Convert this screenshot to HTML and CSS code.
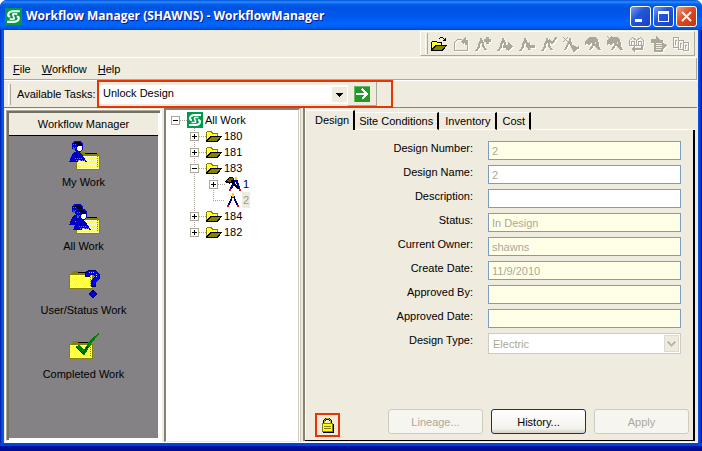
FILE: index.html
```html
<!DOCTYPE html>
<html lang="en">
<head>
<meta charset="utf-8">
<title>Workflow Manager (SHAWNS) - WorkflowManager</title>
<link rel="stylesheet" href="styles.css">
</head>
<body>
<svg class="defs" aria-hidden="true">
  <defs>
    <symbol id="logo" viewBox="0 0 16 16">
      <path fill="#009a4a" d="M0 0h16v16H0z"/>
      <g class="smooth" fill="none" stroke="#fff" stroke-width="2">
        <path d="M14 3H8Q3 3 3 6.500 3 8 5 8"/>
        <path d="M2 13h6q5 0 5-3.500Q13 8 11 8"/>
        <path d="M11.500 5.500H8.500Q6.500 5.500 8 8t-.500 2.500H4.500" stroke-width="1.500"/>
      </g>
    </symbol>
    <symbol id="folder" viewBox="0 0 16 16">
      <path fill="#848200" d="M1 3h5l1 2h5v4H1v4H0V4h1z"/>
      <path fill="#ffff31" d="M1 4h4l1 2h5v3H4l-3 3z"/>
      <path stroke="#fff" stroke-dasharray="1 1" d="M1 5.500h5M2 7.500h9M1 9.500h3"/>
      <path fill="#000" d="M4 8h12l-4 6H0v-1z"/>
      <path fill="#848200" d="M5 9h9l-3 4H1z"/>
    </symbol>
    <symbol id="open" viewBox="0 0 16 16">
      <path fill="#000" d="M1 5h4l1 1h5v3H2v5H0V6h1z"/>
      <path fill="#ffff31" d="M1 6h4l1 1h4v2H4l-3 4z"/>
      <path stroke="#fff" stroke-dasharray="1 1" d="M1 7.500h5M1 9.500h3"/>
      <path fill="#000" d="M4 9h12l-4 6H0v-1z"/>
      <path fill="#848200" d="M5 10h9l-3 4H1z"/>
      <path fill="#000" d="M9 1h3v1H9zM8 2h1v1H8zM12 2h1v1h-1zM13 3h1V2h1v3h-3V4h1z"/>
    </symbol>
    <symbol id="compass" viewBox="0 0 16 16">
      <path fill="#000084" d="M6 4h4v3h1v2h1v2h1v2h-2v-2h-1V9H9V6H7v3H6v2H5v2H3v-2h1V9h1V7h1z"/>
      <path fill="#ffce00" d="M7 1h2v4H7z"/>
      <path fill="#f00" d="M2 13h2v2H2zM12 13h2v2h-2z"/>
    </symbol>
    <symbol id="hammer" viewBox="0 0 16 16">
      <path fill="#0000a5" d="M8 4h5v3h1v3h1v3h-2v-2h-1V8h-1V6h-1v2H9v2H8v2H7v1H5v-2h1V9h1V7h1z"/>
      <path fill="#ffce00" d="M10 1h2v3h-2z"/>
      <path fill="#f00" d="M4 13h2v2H4zM14 13h2v2h-2z"/>
      <path fill="#000" d="M0 5h1V4h1V3h1V2h1V1h4v1h1v3H8v1h1v1h1v1h1v1h1v1h1v1h1v2h-2v-1h-1v-1h-1v-1H9V9H8V8H7V7H5v1H4V7H1z"/>
      <path fill="#636300" d="M2 4h2V2h4v2H6v2H3z"/>
    </symbol>
    <symbol id="legs" viewBox="0 0 16 16">
      <path fill="none" stroke="currentColor" stroke-width="2" d="M6 2v3L4 8v3l-3 4M6 4l2 3v3l3 4"/>
    </symbol>
    <symbol id="mallet" viewBox="0 0 16 16">
      <path fill="none" stroke="currentColor" stroke-width="2" d="M9 6 8 9l-3 5M11 3l2 4v4l2 3"/>
      <path fill="currentColor" d="M0 5 4 1h6l3 3v4l1 3-1 3-7-7-2 2-2-1-2 1z"/>
      <path fill="#efebde" d="M10 6h1v2h-1z"/>
    </symbol>
    <symbol id="worker" viewBox="0 0 20 24">
      <path fill="#0000ce" d="M5 1h6l3 3v5l-3 3H7L4 9H3V4z"/>
      <path fill="#000" d="M6 2h5l2 3v1H8V4H5z"/>
      <path stroke="#5252ff" stroke-dasharray="1 1" d="M4 4.500h4M4 7.500h3"/>
      <path fill="#fff" d="M9 6h4v3l-2 2H9L8 9z"/>
      <path fill="#008484" d="M4 8h2v2H4z"/>
      <path fill="#0000ce" d="M5 12h5l4 4 4 6-5-1-3-1-2 2H0l2-5z"/>
      <path stroke="#7b7bd6" stroke-dasharray="1 1" d="M6 18.500h7M7 20.500h9"/>
      <path fill="#000084" d="M7 13h2v5H7z"/>
    </symbol>
    <symbol id="sheet" viewBox="0 0 24 18">
      <path fill="#848200" d="M1 3 4 0h5l2 2h10l3 1v15H0V3z"/>
      <path stroke="#000" d="M9 1.500h12"/>
      <path fill="#ffff42" d="M1 4h22v12H1z"/>
      <path stroke="#fff" stroke-dasharray="1 1" d="M2 4.500h19M2 8.500h19M2 12.500h19"/>
      <path stroke="#fff" stroke-dasharray="1 1" d="M3 6.500h18M3 10.500h18M3 14.500h18"/>
      <path stroke="#848200" stroke-dasharray="1 1" d="M21.500 4v12"/>
      <path stroke="#ffffb5" d="M1 16.500h22"/>
    </symbol>
  </defs>
</svg>

<div class="window">
  <header class="titlebar">
    <svg class="icon logo"><use href="#logo"/></svg>
    <h1>Workflow Manager (SHAWNS) - WorkflowManager</h1>
    <div class="captions">
      <button class="caption" aria-label="Minimize"><svg viewBox="0 0 19 19"><path fill="#fff" d="M4 12h7v3H4z"/></svg></button>
      <button class="caption" aria-label="Maximize"><svg viewBox="0 0 19 19"><path fill="none" stroke="#fff" d="M4.500 5.500h10v9h-10z"/><path fill="#fff" d="M4 4h11v3H4z"/></svg></button>
      <button class="caption close" aria-label="Close"><svg class="smooth" viewBox="0 0 19 19"><path stroke="#fff" stroke-width="2" d="m5 5 9 9M14 5l-9 9"/></svg></button>
    </div>
  </header>

  <div class="client">
    <div class="toolrow">
      <div class="toolbar" role="toolbar" aria-label="Design tools">
        <span class="grip"></span>
        <button aria-label="Open"><svg class="icon"><use href="#open"/></svg></button>
        <button disabled aria-label="New work"><svg class="icon" viewBox="0 0 16 16"><path fill="none" stroke="currentColor" d="M1.500 14.500V6.500l3-3h4M1.500 14.500h13V5"/><path fill="currentColor" d="m8 5 4-4 1 1v2h2v5h-3V6l-2 2z"/></svg></button>
        <button disabled aria-label="Add design"><svg class="icon" viewBox="0 0 16 16"><use href="#legs"/><path fill="currentColor" d="M9 3h2V1h3v2h2v3h-2v2h-3V6H9z"/></svg></button>
        <button disabled aria-label="Send design"><svg class="icon" viewBox="0 0 16 16"><use href="#legs"/><path fill="currentColor" d="M6 9h5V6l5 4-5 5v-3H6z"/></svg></button>
        <button disabled aria-label="Return design"><svg class="icon" viewBox="0 0 16 16"><use href="#legs"/><path fill="currentColor" d="M16 9v3h-5v3l-5-5 5-4v3z"/></svg></button>
        <button disabled aria-label="Approve design"><svg class="icon" viewBox="0 0 16 16"><use href="#legs"/><path fill="none" stroke="currentColor" stroke-width="2" d="m8 4 3 3 5-6"/></svg></button>
        <button disabled aria-label="Cancel design"><svg class="icon" viewBox="0 0 16 16"><path fill="none" stroke="currentColor" d="m0 1 5 5M5 1 0 6"/><path fill="none" stroke="currentColor" stroke-width="2" d="M7 2v3L5 8l-3 6M7 5l2 6 2 4 5-4"/><path fill="currentColor" d="m8 8 4 2 3 2-4 4z"/></svg></button>
        <button disabled aria-label="Construct"><svg class="icon"><use href="#mallet"/></svg></button>
        <button disabled aria-label="Cancel construction"><svg class="icon" viewBox="0 0 16 16"><use href="#mallet"/><path stroke="currentColor" d="m0 0 5 5M5 0 0 5"/></svg></button>
        <button disabled aria-label="Exchange"><svg class="icon" viewBox="0 0 16 16"><path fill="none" stroke="currentColor" d="M.500 9.500v-5l3-3 4 3 4-3 3 3v5zM7.500 4v5M2.500 9V5.500h3V9M9.500 9V5.500h3V9"/><path fill="currentColor" d="m2 13 4-3v2h6v-2h2v4H6v2z"/></svg></button>
        <button disabled aria-label="Transfer document"><svg class="icon" viewBox="0 0 16 16"><path fill="currentColor" d="M0 3h5V0l5 4h2v3l4 2-4 5v2H3V7H0z"/><path stroke="#efebde" d="M5 7.500h6M5 9.500h6M5 11.500h6M5 13.500h5"/></svg></button>
        <button disabled aria-label="Reports"><svg class="icon" viewBox="0 0 16 16"><path fill="none" stroke="currentColor" d="M.500 1.500h5v10h-5zM6 4.500h4v9H5.500v-2M10 6.500h5v8h-5M2 4h2M7 7h2M12 9h2M2.500 4v5M7.500 7v5M12.500 9v4"/></svg></button>
      </div>
    </div>

    <nav class="menubar">
      <button><u>F</u>ile</button>
      <button><u>W</u>orkflow</button>
      <button><u>H</u>elp</button>
    </nav>

    <div class="taskbar">
      <span class="grip"></span>
      <label for="task">Available Tasks:</label>
      <div class="callout">
        <div class="combo">
          <select id="task"><option>Unlock Design</option></select>
          <svg class="arrow" viewBox="0 0 15 15"><path fill="#efebde" d="M0 0h15v15H0z"/><path d="M4 6h7v1h-1v1H9v1H8v1H7V9H6V8H5V7H4z"/></svg>
        </div>
        <div class="gobox">
          <button class="go" aria-label="Run task"><svg class="icon" viewBox="0 0 16 16"><path fill="#219a29" d="M0 0h16v16H0z"/><path fill="none" stroke="#63ba63" d="M0 .500h16M.500 0v16"/><path fill="none" stroke="#fff" stroke-width="2" d="M2 8h11M8 3l5 5-5 5"/></svg></button>
        </div>
      </div>
    </div>

    <main class="panes">
      <aside class="outlook">
        <h2>Workflow Manager</h2>
        <a href="#my"><svg viewBox="0 0 32 32"><use href="#sheet" x="8" y="14" width="24" height="18"/><use href="#worker" x="1" y="2" width="20" height="24"/></svg>My Work</a>
        <a href="#all"><svg viewBox="0 0 32 32"><use href="#sheet" x="8" y="14" width="24" height="18"/><use href="#worker" x="1" y="1" width="20" height="24"/><use href="#worker" x="5" y="6" width="20" height="24"/></svg>All Work</a>
        <a href="#status"><svg viewBox="0 0 32 32"><use href="#sheet" x="1" y="5" width="24" height="18"/><path fill="none" stroke="#000063" stroke-width="5" d="M19 11V8l3-2h4l3 3v3l-4 4v5"/><path fill="none" stroke="#0000ff" stroke-width="3" d="M19 10V8l3-2h4l3 3v3l-4 4v4"/><path stroke="#9cceff" stroke-dasharray="1 1" d="M21 6.500h5M28.500 8v4"/><path fill="#0000ce" stroke="#000063" d="m25 24 4 4-4 4-4-4z"/></svg>User/Status Work</a>
        <a href="#done"><svg viewBox="0 0 32 32"><use href="#sheet" x="1" y="11" width="24" height="18"/><path fill="#008200" d="m8 16 3-1 5 5 6-10 9-7v1l-8 10-7 12z"/><path fill="none" stroke="#003100" d="m8 17 7 7 5-8"/></svg>Completed Work</a>
      </aside>

      <section class="tree" aria-label="Work tree">
        <ul>
          <li>
            <div class="node"><button class="expander" aria-label="Collapse"><svg viewBox="0 0 9 9"><path d="M2 4h5v1H2z"/></svg></button><i class="link"></i><svg class="icon"><use href="#logo"/></svg><span>All Work</span></div>
            <ul class="trunk">
              <li class="node"><button class="expander" aria-label="Expand"><svg viewBox="0 0 9 9"><path d="M2 4h5v1H2zM4 2h1v5H4z"/></svg></button><i class="link"></i><svg class="icon"><use href="#folder"/></svg><span>180</span></li>
              <li class="node"><button class="expander" aria-label="Expand"><svg viewBox="0 0 9 9"><path d="M2 4h5v1H2zM4 2h1v5H4z"/></svg></button><i class="link"></i><svg class="icon"><use href="#folder"/></svg><span>181</span></li>
              <li>
                <div class="node"><button class="expander" aria-label="Collapse"><svg viewBox="0 0 9 9"><path d="M2 4h5v1H2z"/></svg></button><i class="link"></i><svg class="icon"><use href="#folder"/></svg><span>183</span></div>
                <ul class="trunk">
                  <li class="node"><button class="expander" aria-label="Expand"><svg viewBox="0 0 9 9"><path d="M2 4h5v1H2zM4 2h1v5H4z"/></svg></button><i class="link"></i><svg class="icon"><use href="#hammer"/></svg><span>1</span></li>
                  <li class="node leaf"><i class="link"></i><svg class="icon"><use href="#compass"/></svg><span class="selected">2</span></li>
                </ul>
              </li>
              <li class="node"><button class="expander" aria-label="Expand"><svg viewBox="0 0 9 9"><path d="M2 4h5v1H2zM4 2h1v5H4z"/></svg></button><i class="link"></i><svg class="icon"><use href="#folder"/></svg><span>184</span></li>
              <li class="node"><button class="expander" aria-label="Expand"><svg viewBox="0 0 9 9"><path d="M2 4h5v1H2zM4 2h1v5H4z"/></svg></button><i class="link"></i><svg class="icon"><use href="#folder"/></svg><span>182</span></li>
            </ul>
          </li>
        </ul>
      </section>

      <section class="details">
        <div class="tabs" role="tablist">
          <button role="tab" aria-selected="true">Design</button>
          <button role="tab">Site Conditions</button>
          <button role="tab">Inventory</button>
          <button role="tab">Cost</button>
          <span class="rest"></span>
        </div>
        <form class="page">
          <div class="fields">
            <label for="num">Design Number:</label><input id="num" class="locked" value="2" disabled>
            <label for="name">Design Name:</label><input id="name" value="2" disabled>
            <label for="desc">Description:</label><input id="desc">
            <label for="status">Status:</label><input id="status" class="locked" value="In Design" disabled>
            <label for="owner">Current Owner:</label><input id="owner" class="locked" value="shawns" disabled>
            <label for="created">Create Date:</label><input id="created" class="locked" value="11/9/2010" disabled>
            <label for="by">Approved By:</label><input id="by" class="locked" disabled>
            <label for="date">Approved Date:</label><input id="date" class="locked" disabled>
            <label for="type">Design Type:</label>
            <div class="combo type">
              <select id="type" disabled><option>Electric</option></select>
              <svg class="arrow" viewBox="0 0 15 17"><rect x=".500" y=".500" width="14" height="16" rx="1" fill="#efebde" stroke="#dedbce"/><path fill="none" stroke="#bdbaad" stroke-width="2" d="m4 7 3.500 3.500L11 7"/></svg>
            </div>
          </div>
          <div class="actions">
            <span class="lock"><svg viewBox="0 0 14 16" role="img" aria-label="Locked"><path d="M4 1h5v1h1v1h1v4H9V4H8V3H5v1H4v3H2V3h1V2h1z"/><path fill="#b5b200" d="M5 2h3v1h1v4h1V3H9V2H8V1H5v1H4v1H3v4h1V3h1z"/><path d="M2 7h11v9H2z"/><path fill="#848200" d="M1 6h11v9H1z"/><path fill="#ffff00" d="M2 7h9v7H2z"/><path stroke="#848200" d="M3 9.500h7M3 11.500h7"/></svg></span>
            <div class="buttons">
              <button type="button" disabled>Lineage...</button>
              <button type="button" class="default">History...</button>
              <button type="button" disabled>Apply</button>
            </div>
          </div>
        </form>
      </section>
    </main>
  </div>
</div>
</body>
</html>
```

FILE: styles.css
```css
* { box-sizing: border-box; }

body {
  margin: 0;
  background: #fff;
  color: #000;
  font: 11px/16px "Liberation Sans", Arial, sans-serif;
}

button, input, select { font: inherit; color: inherit; margin: 0; padding: 0; border: 0; background: none; border-radius: 0; }
ul { list-style: none; margin: 0; padding: 0; }
svg { display: block; flex: none; shape-rendering: crispEdges; }
.smooth { shape-rendering: auto; }
.defs { position: absolute; width: 0; height: 0; }
.icon { width: 16px; height: 16px; }

.window {
  display: flex;
  flex-direction: column;
  min-height: 100vh;
  padding: 0 4px 8px;
  border-radius: 7px 7px 0 0;
  background:
    linear-gradient(#0042de, #0042de 3px, #0014a5 3px, #000c8c) bottom / 100% 8px no-repeat,
    linear-gradient(90deg, #0018a5, #0855e7 2px, #0855e7 4px, #0855e7 calc(100% - 4px), #0041d6 calc(100% - 2px), #00138c);
}

.titlebar {
  display: flex;
  align-items: center;
  gap: 4px;
  height: 30px;
  margin: 0 -4px;
  padding: 2px 5px 0;
  border-radius: 7px 7px 0 0;
  background: linear-gradient(#0050d6, #2a8cff 2px, #0561ed 4px, #0052e0 8px, #0058ee 16px, #0066ff 25px, #0050dd 29px, #003cc6);
}
.titlebar h1 {
  flex: 1;
  margin: 0;
  color: #fff;
  font: bold 12px/18px "Open Sans", "Noto Sans", sans-serif;
  text-shadow: 1px 1px #0a1883;
  white-space: nowrap;
}
.logo { width: 17px; height: 17px; }
.captions { display: flex; gap: 2px; }
.caption { width: 21px; height: 21px; border: 1px solid #fff; border-radius: 3px; background: linear-gradient(135deg, #7b9ef0, #2456da 40%, #1941c4); }
.caption svg { width: 19px; height: 19px; }
.close { background: linear-gradient(135deg, #f0a088, #e04a20 45%, #c03410); }

.client { flex: 1; display: flex; flex-direction: column; background: #efebde; border-right: 1px solid #efebde; }

.toolrow { display: flex; justify-content: flex-end; height: 28px; padding: 1px 2px 1px 0; border-bottom: 1px solid #fff; }
.toolbar { display: flex; align-items: center; padding-left: 4px; border: 1px solid #fff; border-right-color: #aca899; border-bottom-color: #aca899; }
.toolbar button { display: grid; place-items: center; width: 22px; height: 22px; }
.toolbar button:last-child { margin-right: 2px; }
.toolbar button:disabled { color: #aca899; }
.toolbar button:disabled svg { filter: drop-shadow(1px 1px 0 #fff); }
.grip { width: 3px; height: 21px; border-left: 1px solid #fff; border-right: 1px solid #aca899; }

.menubar { display: flex; align-items: center; gap: 11px; height: 22px; padding-left: 9px; border-bottom: 1px solid #aca899; border-right: 1px solid #aca899; }

.taskbar { display: flex; align-items: center; height: 28px; padding-left: 4px; border-top: 1px solid #fff; border-bottom: 1px solid #848274; }
.taskbar label { width: 86px; padding-left: 6px; white-space: nowrap; }
.callout { display: flex; align-items: center; width: 296px; height: 28px; border: 2px solid #e73400; }
.combo { display: grid; align-items: center; background: #fff; }
.combo select { grid-area: 1 / 1; width: 100%; height: 100%; padding: 0 20px 0 4px; appearance: none; opacity: 1; }
.combo .arrow { grid-area: 1 / 1; justify-self: end; width: 15px; height: 15px; margin-right: 1px; pointer-events: none; }
.callout .combo { flex: 1; height: 19px; }
.callout select { padding-bottom: 2px; }
.gobox { display: grid; place-items: center; width: 29px; height: 24px; margin-right: 14px; border-right: 1px solid #aca899; border-bottom: 1px solid #aca899; }

.panes { flex: 1; display: grid; grid-template-columns: 157px 137px 1fr; gap: 2px; padding-left: 1px; border-bottom: 1px solid #fff; }

.outlook {
  display: flex;
  flex-direction: column;
  margin-top: 1px;
  border: 2px solid #aca899;
  border-right-color: #fff;
  border-bottom-color: #fff;
  outline: 1px solid #fff;
  outline-offset: -1px;
  box-shadow: inset 2px 2px #737163, inset -2px -2px #fff;
  padding: 2px;
  background: #848284;
}
.outlook h2 { margin: 0 0 2px; height: 23px; padding: 3px 0; border-bottom: 1px solid #000; background: #efebde; font-size: 11px; line-height: 16px; font-weight: normal; text-align: center; }
.outlook a { display: flex; flex-direction: column; align-items: center; gap: 4px; height: 64px; color: #000; text-decoration: none; }
.outlook a svg { width: 32px; height: 32px; }

.tree { padding: 2px 0 0 5px; border: 2px solid #848274; border-right: 3px double #cecbbd; border-bottom: 1px solid #efebde; background: #fff; }
.node { display: flex; align-items: center; height: 16px; }
.node span { margin-left: 1px; padding: 0 1px; }
.node .selected { background: #efebde; color: #9c9a8c; }
.expander { display: grid; width: 9px; height: 9px; border: 1px solid #aca899; background: #fff; }
.expander svg { width: 9px; height: 9px; margin: -1px; }
.link { width: 7px; height: 1px; background: repeating-linear-gradient(90deg, #aca899 0 1px, transparent 1px 2px); }
.leaf .link { width: 12px; margin-left: 4px; }
.trunk { padding-left: 19px; background: repeating-linear-gradient(#aca899 0 1px, transparent 1px 2px) 23px 0 / 1px calc(100% - 8px) no-repeat; }

.details { display: flex; flex-direction: column; margin: 0 2px 1px 0; padding-top: 2px; border-left: 2px solid #848274; box-shadow: inset 1px 0 #fff; }
.tabs { display: flex; align-items: flex-end; }
.tabs button { height: 18px; padding: 0 4px; border-right: 2px solid #000; border-bottom: 1px solid #fff; border-top: 1px solid #fff; white-space: nowrap; }
.tabs button:nth-child(n+3) { padding-left: 6px; }
.tabs button[aria-selected] { height: 20px; padding: 0 4px 2px 10px; border-bottom: 0; }
.rest { flex: 1; height: 1px; background: #fff; }
.page { flex: 1; display: flex; flex-direction: column; justify-content: space-between; padding: 11px 4px 3px 10px; border-right: 2px solid #000; border-bottom: 1px solid #000; }
.fields { display: grid; grid-template-columns: 1fr 193px; grid-auto-rows: 19px; gap: 5px 15px; padding-right: 8px; }
.fields label { text-align: right; line-height: 14px; }
.fields input { width: 100%; height: 19px; padding: 1px 3px 0; border: 1px solid #7b9ebd; background: #fff; }
.fields .locked { background: #ffffe7; }
.fields :disabled { color: #aca899; }
.type { height: 21px; border: 1px solid #ceccc0; }
.type .arrow { height: 17px; }

.actions { display: flex; justify-content: space-between; align-items: flex-end; }
.lock { display: grid; place-items: center; width: 25px; height: 24px; border: 2px solid #e73400; }
.lock svg { width: 14px; height: 16px; }
.buttons { display: flex; gap: 8px; padding-bottom: 3px; }
.buttons button { width: 95px; height: 25px; border: 1px solid #ceccc0; border-radius: 3px; background: #f7f5ef; color: #aca899; }
.buttons .default { border-color: #003c74; color: #000; background: linear-gradient(#fff, #f3f2ec 80%, #d6d0c5); }
```
